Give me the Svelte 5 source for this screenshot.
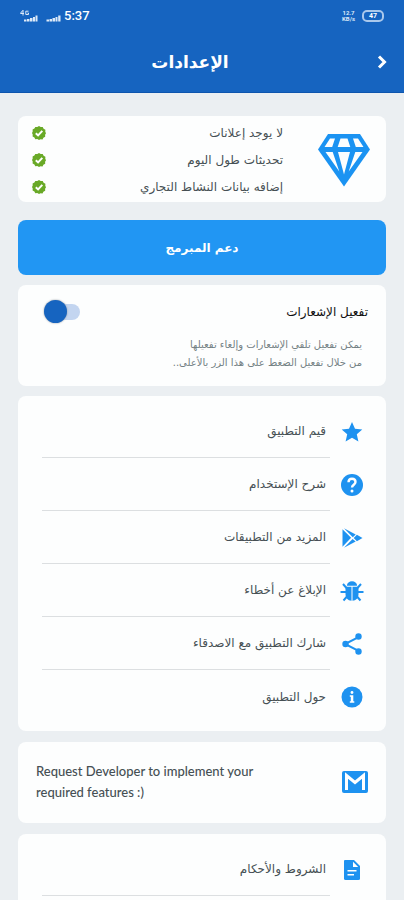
<script>
  let notifications = $state(false);

  const perks = ['لا يوجد إعلانات', 'تحديثات طول اليوم', 'إضافه بيانات النشاط التجاري'];

  const items = [
    { icon: 'star', label: 'قيم التطبيق' },
    { icon: 'help', label: 'شرح الإستخدام' },
    { icon: 'play', label: 'المزيد من التطبيقات' },
    { icon: 'bug', label: 'الإبلاغ عن أخطاء' },
    { icon: 'share', label: 'شارك التطبيق مع الاصدقاء' },
    { icon: 'info', label: 'حول التطبيق' }
  ];

  const legal = [{ icon: 'doc', label: 'الشروط والأحكام' }];
</script>

{#snippet glyph(name)}
  <svg class="glyph" viewBox="0 0 24 24" aria-hidden="true">
    {#if name === 'star'}
      <path d="M12 2l3 6.700 7.300.7-5.500 4.800 1.600 7.200L12 17.700l-6.400 3.700 1.600-7.200L1.700 9.400 9 8.700z" />
    {:else if name === 'help'}
      <circle cx="12" cy="12" r="11" />
      <path class="cut-line" d="M8.500 9.300c0-2 1.500-3.500 3.500-3.500s3.500 1.400 3.500 3.300c0 2.600-3.500 2.700-3.500 5.400" />
      <circle class="cut" cx="12" cy="18" r="1.500" />
    {:else if name === 'play'}
      <path d="M2.500 3.200l8.600 8.600-8.600 9z" />
      <path d="M4 2.300l11.700 6.200-2.900 2.700z" />
      <path d="M4 21.700l8.600-8.700 3.100 2.600z" />
      <path d="M16.900 8.800l5.600 3.200-5.600 3.300-3.200-3.300z" />
    {:else if name === 'bug'}
      <path d="M6.800 6.800C7.100 4 9.300 2.300 12 2.300s4.900 1.700 5.200 4.500z" />
      <path d="M5.500 7.800h6v14C7.800 21.500 5.500 18.700 5.500 15zM12.500 7.800h6V15c0 3.700-2.300 6.500-6 6.800z" />
      <path class="line" d="M3 5l3.500 4M21 5l-3.500 4M.5 13h5.500M23.500 13h-5.500M3.500 21.500l3.500-4M20.500 21.500l-3.500-4" />
    {:else if name === 'share'}
      <path class="line" d="M19 4.800L5 12l14 7.200" />
      <circle cx="18.500" cy="4.500" r="3.200" />
      <circle cx="5.500" cy="12" r="3.200" />
      <circle cx="18.500" cy="19.500" r="3.200" />
    {:else if name === 'info'}
      <circle cx="12" cy="12" r="10.500" />
      <circle class="cut" cx="12" cy="7.500" r="1.400" />
      <path class="cut" d="M9.800 10.300h3.500v5.900h1v1.500H9.800v-1.500h1v-4.400h-1z" />
    {:else if name === 'doc'}
      <path d="M4.500 2h9.500l6 6v12.500A1.500 1.500 0 0118.500 22h-13A1.500 1.500 0 014 20.500v-18z" />
      <path class="cut" d="M13 3.800V9h5.200zM7.500 12h9v1.600h-9zM7.500 16h6.500v1.600H7.500z" />
    {/if}
  </svg>
{/snippet}

{#snippet row(item)}
  <li>
    <a href="#{item.icon}">
      {@render glyph(item.icon)}
      <span>{item.label}</span>
    </a>
  </li>
{/snippet}

<div class="app" dir="rtl">
  <header>
    <div class="status" dir="ltr">
      <svg class="signal" viewBox="0 0 18 12" aria-hidden="true">
        <path d="M4 11.500v-2h2.500v2zM7 11.500V9h2.500v2.500zM10 11.500V8h2.500v3.500zM13 11.500V7h2v4.500zM15.500 11.500V5.500h2v6z" />
        <path class="thin" d="M3 0v5.500M.3 3.500h3.700M.7 3L2.700.5M8.500 1.200H5.800v3.300h2.700V3H7.500" />
      </svg>
      <svg class="signal second" viewBox="0 0 15 12" aria-hidden="true">
        <path d="M.5 11.500v-2H3v2zM3.500 11.500V9H6v2.500zM6.500 11.500V8H9v3.500zM9.500 11.500V7h2v4.500zM12.200 11.500V5.500h2.300v6z" />
      </svg>
      <span class="time">5:37</span>
      <span class="speed"><b>12.7</b><b>KB/s</b></span>
      <span class="battery"><i>47</i></span>
    </div>
    <div class="bar">
      <button class="back" aria-label="رجوع">
        <svg viewBox="0 0 12 16" aria-hidden="true"><path d="M3 2.500L8.500 8 3 13.500" /></svg>
      </button>
      <h1>الإعدادات</h1>
    </div>
  </header>

  <main>
    <section class="card premium">
      <svg class="diamond" viewBox="0 0 54 54" aria-hidden="true">
        <path d="M11 1h32l10 15.500L27 53.500 1 16.500z" />
        <path class="facet" d="M13 5.500h5l-2.800 8.500H7.500zM23.500 5.500h7l2.800 8.500H20.700zM36 5.500h5l5.500 8.500h-7.700zM8.500 19h7.200l6.600 19.500zM21 19h12l-6 22.500zM38.300 19h7.200L31.700 38.500z" />
      </svg>
      <ul>
        {#each perks as perk}
          <li>
            <span>{perk}</span>
            <svg class="badge" viewBox="0 0 14 14" aria-hidden="true">
              <path d="M7 0l1.700 1.100 2-.1.900 1.800 1.800.9-.1 2L14 7.300l-.9 1.500.1 2-1.800.900-.9 1.700-2-.1L7 14l-1.700-.9-2 .1-.9-1.700-1.800-.9.100-2L0 7l.7-1.500-.1-2 1.800-.900L3.300 1l2 .1z" />
              <path class="tick" d="M3.800 7.200l2.300 2.200 4.200-4.500" />
            </svg>
          </li>
        {/each}
      </ul>
    </section>

    <button class="support">دعم المبرمج</button>

    <section class="card notify">
      <div class="notify-head">
        <label for="notify">تفعيل الإشعارات</label>
        <input id="notify" type="checkbox" role="switch" bind:checked={notifications} />
      </div>
      <p>يمكن تفعيل تلقي الإشعارات وإلغاء تفعيلها<br />من خلال تفعيل الضغط على هذا الزر بالأعلى..</p>
    </section>

    <ul class="card menu">
      {#each items as item}{@render row(item)}{/each}
    </ul>

    <a class="card request" href="#request">
      <svg class="mail" viewBox="0 0 26 22" aria-hidden="true">
        <rect width="26" height="22" rx="2" />
        <path d="M4.500 19V4.500L13 11.500l8.500-7V19" />
      </svg>
      <span dir="ltr">Request Developer to implement your required features :)</span>
    </a>

    <ul class="card menu legal">
      {#each legal as item}{@render row(item)}{/each}
    </ul>
  </main>
</div>

<style>
  :global(body) {
    margin: 0;
  }

  .app {
    display: flex;
    flex-direction: column;
    height: 100vh;
    overflow: hidden;
    background: #ebeff2;
    color: #465054;
    font-family: 'DejaVu Sans', sans-serif;
    font-size: 12px;
  }

  ul,
  h1,
  p {
    margin: 0;
    padding: 0;
    list-style: none;
  }

  button {
    border: 0;
    font-family: inherit;
    cursor: pointer;
  }

  a {
    color: inherit;
    text-decoration: none;
  }

  header {
    flex: none;
    box-sizing: border-box;
    border-bottom: 1px solid #0d55ae;
    background: #1664c0;
    color: #fff;
  }

  .status {
    display: flex;
    align-items: center;
    height: 32px;
    padding: 0 20px;
  }

  .signal {
    width: 18px;
    height: 12px;
    fill: #dce9f8;
  }

  .second {
    width: 15px;
    margin-left: 8px;
  }

  .thin {
    fill: none;
    stroke: #dce9f8;
  }

  .time {
    margin-left: 3px;
    font: 500 13px/16px Roboto, sans-serif;
  }

  .speed {
    display: flex;
    flex-direction: column;
    margin-left: auto;
    color: #dce9f8;
    font: 6px/6px Roboto, sans-serif;
    text-align: center;
  }

  .battery {
    display: flex;
    align-items: center;
    justify-content: center;
    box-sizing: border-box;
    width: 22px;
    height: 12px;
    margin-left: 7px;
    border: 2px solid #a9c8ec;
    border-radius: 5px;
    font: 700 7px/8px Roboto, sans-serif;
  }

  .battery i {
    font-style: normal;
  }

  .bar {
    display: grid;
    grid-template-columns: 44px 1fr 44px;
    align-items: center;
    height: 60px;
  }

  .back {
    display: flex;
    justify-content: center;
    padding: 8px;
    background: none;
  }

  .back svg {
    width: 12px;
    height: 16px;
    fill: none;
    stroke: #fff;
    stroke-width: 3;
  }

  h1 {
    padding-right: 24px;
    font-size: 17px;
    line-height: 28px;
    text-align: center;
  }

  main {
    flex: 1;
    min-height: 0;
    padding: 23px 18px 0;
  }

  .card {
    display: block;
    margin-bottom: 11px;
    border-radius: 8px;
    background: #fdfefe;
  }

  .premium {
    display: flex;
    align-items: center;
    margin-bottom: 18px;
    padding: 3px 15px 2px 20px;
  }

  .diamond {
    flex: none;
    width: 54px;
    height: 54px;
    margin-left: 34px;
    fill: #1b93f2;
  }

  .facet {
    fill: #fdfefe;
  }

  .premium ul {
    flex: 1;
  }

  .premium li {
    display: flex;
    align-items: center;
    justify-content: space-between;
    height: 27px;
    margin-left: -6px;
  }

  .badge {
    width: 14px;
    height: 14px;
    fill: #69a927;
  }

  .tick {
    fill: none;
    stroke: #fff;
    stroke-width: 2;
  }

  .support {
    display: block;
    width: 100%;
    height: 55px;
    margin-bottom: 10px;
    border-radius: 8px;
    background: #2196f3;
    color: #fff;
    font-size: 12px;
    font-weight: 700;
  }

  .notify {
    margin-bottom: 10px;
    padding: 11px 18px 14px 26px;
  }

  .notify-head {
    display: flex;
    align-items: center;
    justify-content: space-between;
    height: 32px;
    color: #111;
  }

  .notify input {
    position: relative;
    width: 36px;
    height: 24px;
    margin: 0;
    appearance: none;
    cursor: pointer;
  }

  .notify input::before {
    content: '';
    position: absolute;
    inset: 4px 0 4px 6px;
    border-radius: 8px;
    background: #c3d5f0;
  }

  .notify input::after {
    content: '';
    position: absolute;
    top: 0;
    left: 0;
    width: 23px;
    height: 23px;
    border-radius: 50%;
    background: #1664c0;
    box-shadow: 0 0 2px #8a9199;
  }

  .notify input:checked::after {
    left: 13px;
  }

  .notify p {
    padding: 8px 6px 0 0;
    color: #748184;
    font-size: 10px;
    line-height: 18px;
  }

  .menu {
    padding: 9px 22px 8px 24px;
  }

  .menu a {
    display: flex;
    align-items: center;
    height: 53px;
  }

  .menu span {
    display: flex;
    flex: 1;
    align-items: center;
    box-sizing: border-box;
    height: 53px;
    margin-right: 10px;
    padding-right: 4px;
    border-bottom: 1px solid #dcdfe1;
  }

  .menu:not(.legal) li:last-child span {
    border-bottom: 0;
  }

  .legal {
    padding-bottom: 40px;
  }

  .glyph {
    flex: none;
    width: 24px;
    height: 24px;
    fill: #1e92f0;
  }

  .line {
    fill: none;
    stroke: #1e92f0;
    stroke-width: 2;
  }

  .cut {
    fill: #fff;
  }

  .cut-line {
    fill: none;
    stroke: #fff;
    stroke-width: 2.4;
  }

  .request {
    display: flex;
    align-items: center;
    justify-content: space-between;
    padding: 19px 18px 20px;
  }

  .request span {
    width: 240px;
    font-family: Lato, sans-serif;
    font-size: 13px;
    font-weight: 500;
    line-height: 21px;
  }

  .mail {
    width: 26px;
    height: 22px;
    fill: #1e92f0;
  }

  .mail path {
    fill: none;
    stroke: #fff;
    stroke-width: 3;
  }
</style>
